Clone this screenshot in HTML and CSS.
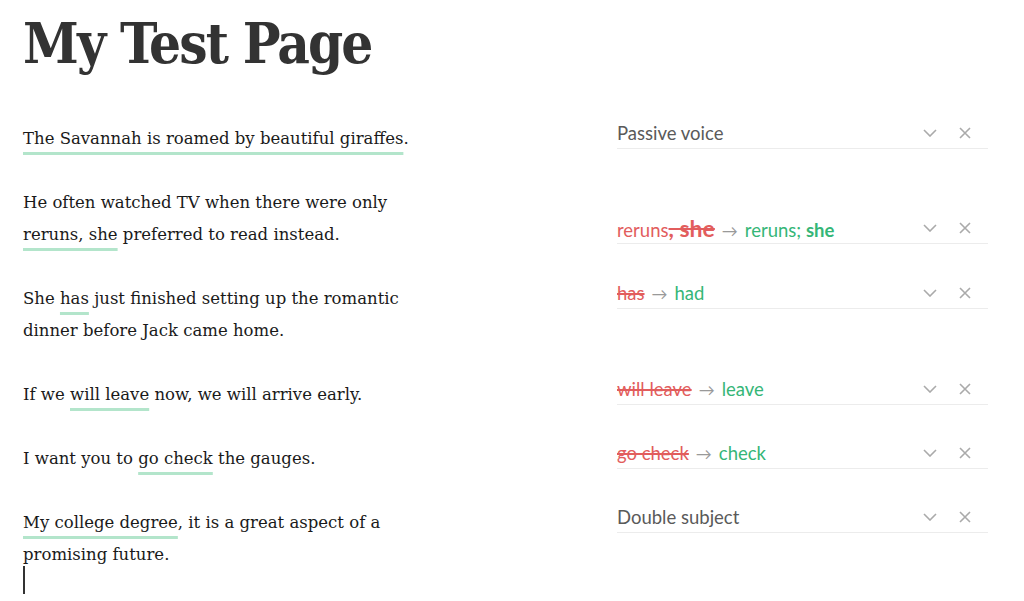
FILE: index.html
```html
<!DOCTYPE html>
<html lang="en">
<head>
<meta charset="utf-8">
<title>My Test Page</title>
<link rel="stylesheet" href="styles.css">
</head>
<body>
<main class="page">
  <h1 class="title">My Test Page</h1>
  <div class="doc">
    <p class="para"><span class="flag">The Savannah is roamed by beautiful giraffes</span>.</p>
    <div class="card">
      <span class="label">Passive voice</span>
      <span class="actions"><svg class="chev" viewBox="0 0 14 8"><path d="M1 1l6 6 6-6"/></svg><svg class="close" viewBox="0 0 12 12"><path d="M1 1l10 10M11 1L1 11"/></svg></span>
    </div>

    <p class="para">He often watched TV when there were only <span class="flag">reruns, she</span> preferred to read instead.</p>
    <div class="card card-l2">
      <span class="label"><span class="old">reruns</span><del class="old strong">, she</del><span class="arrow">→</span><span class="new">reruns; <b>she</b></span></span>
      <span class="actions"><svg class="chev" viewBox="0 0 14 8"><path d="M1 1l6 6 6-6"/></svg><svg class="close" viewBox="0 0 12 12"><path d="M1 1l10 10M11 1L1 11"/></svg></span>
    </div>

    <p class="para">She <span class="flag">has</span> just finished setting up the romantic dinner before Jack came home.</p>
    <div class="card">
      <span class="label"><del class="old">has</del><span class="arrow">→</span><span class="new">had</span></span>
      <span class="actions"><svg class="chev" viewBox="0 0 14 8"><path d="M1 1l6 6 6-6"/></svg><svg class="close" viewBox="0 0 12 12"><path d="M1 1l10 10M11 1L1 11"/></svg></span>
    </div>

    <p class="para">If we <span class="flag">will leave</span> now, we will arrive early.</p>
    <div class="card">
      <span class="label"><del class="old">will leave</del><span class="arrow">→</span><span class="new">leave</span></span>
      <span class="actions"><svg class="chev" viewBox="0 0 14 8"><path d="M1 1l6 6 6-6"/></svg><svg class="close" viewBox="0 0 12 12"><path d="M1 1l10 10M11 1L1 11"/></svg></span>
    </div>

    <p class="para">I want you to <span class="flag">go check</span> the gauges.</p>
    <div class="card">
      <span class="label"><del class="old">go check</del><span class="arrow">→</span><span class="new">check</span></span>
      <span class="actions"><svg class="chev" viewBox="0 0 14 8"><path d="M1 1l6 6 6-6"/></svg><svg class="close" viewBox="0 0 12 12"><path d="M1 1l10 10M11 1L1 11"/></svg></span>
    </div>

    <p class="para"><span class="flag">My college degree</span>, it is a great aspect of a promising future.</p>
    <div class="card">
      <span class="label">Double subject</span>
      <span class="actions"><svg class="chev" viewBox="0 0 14 8"><path d="M1 1l6 6 6-6"/></svg><svg class="close" viewBox="0 0 12 12"><path d="M1 1l10 10M11 1L1 11"/></svg></span>
    </div>

    <div class="caret-line"><span class="caret"></span></div>
  </div>
</main>
</body>
</html>
```

FILE: styles.css
```css
html, body {
  margin: 0;
  padding: 0;
  background: #fff;
}

.page {
  padding: 11px 0 0 23px;
}

.title {
  margin: 0;
  font-family: "DejaVu Serif", serif;
  font-stretch: condensed;
  font-weight: bold;
  font-size: 56px;
  line-height: 64px;
  color: #333;
  letter-spacing: -1.9px;
}

.doc {
  display: grid;
  grid-template-columns: 395px 371px;
  column-gap: 199px;
  row-gap: 32px;
  margin-top: 48px;
}

.para {
  margin: 0;
  font-family: "DejaVu Serif", serif;
  font-size: 16.5px;
  line-height: 32px;
  color: #1a1a1a;
}

.flag {
  text-decoration: underline;
  text-decoration-color: #b3e5cb;
  text-decoration-thickness: 3px;
  text-underline-offset: 8px;
}

.card {
  align-self: start;
  margin-top: -6px;
  height: 31px;
  border-bottom: 1px solid #ececec;
  display: flex;
  align-items: center;
  justify-content: space-between;
  font-family: Lato, "Open Sans", sans-serif;
  font-size: 18.5px;
  color: #5a5a5a;
}

.card-l2 {
  margin-top: 25px;
}

.label {
  white-space: nowrap;
}

.old {
  color: #e25d5d;
}

del.old {
  text-decoration: line-through;
  text-decoration-thickness: 1.5px;
}

.strong {
  font-weight: bold;
  font-size: 23px;
}

.arrow {
  color: #999;
  margin: 0 7px;
  font-size: 16px;
}

.new {
  color: #35b677;
}

.actions {
  display: flex;
  align-items: center;
  gap: 22px;
  padding-right: 17px;
}

.chev {
  width: 14px;
  height: 8px;
  fill: none;
  stroke: #aaa;
  stroke-width: 1.6;
}

.close {
  width: 12px;
  height: 12px;
  fill: none;
  stroke: #aaa;
  stroke-width: 1.6;
}

.caret-line {
  height: 28px;
  margin-top: -37px;
}

.caret {
  display: block;
  width: 1.5px;
  height: 28px;
  background: #333;
}
```
